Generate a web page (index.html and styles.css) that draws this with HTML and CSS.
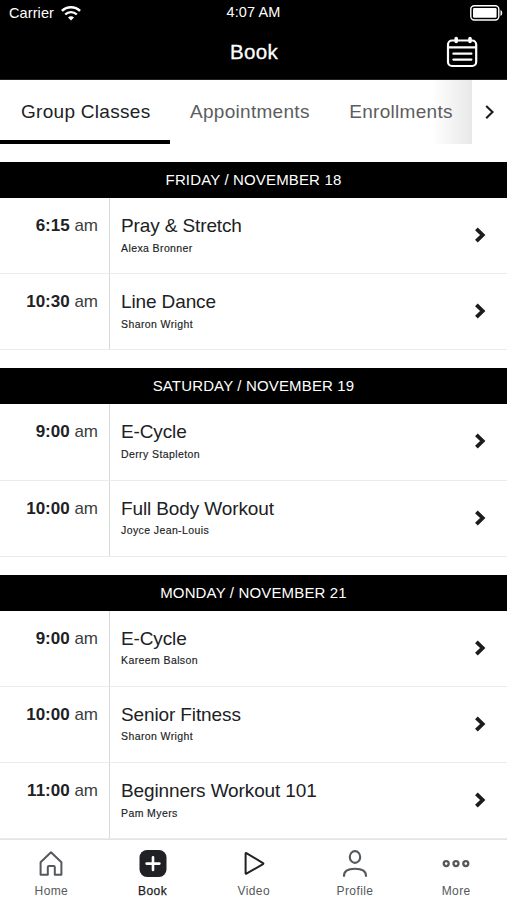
FILE: index.html
```html
<!DOCTYPE html>
<html lang="en">
<head>
<meta charset="utf-8">
<title>Book</title>
<link rel="stylesheet" href="styles.css">
</head>
<body>
<svg class="defs" width="0" height="0"><symbol id="chevron" viewBox="0 0 12 18"><path d="M2.4 2.8 8.7 9l-6.3 6.2" fill="none" stroke="currentColor" stroke-width="3.8"/></symbol></svg>
<div class="app">
  <header class="header">
    <div class="status">
      <div class="carrier"><span>Carrier</span>
        <svg width="20" height="16" viewBox="0 0 20 16" fill="none" stroke="#fff" stroke-width="2.4"><path d="M.9 5.9a13 13 0 0 1 18.2 0M4.2 9.5a8.3 8.3 0 0 1 11.6 0"/><path d="M10 15.6 7 12.6a4.2 4.2 0 0 1 6 0z" fill="#fff" stroke="none"/></svg>
      </div>
      <span class="clock">4:07 AM</span>
      <svg class="battery" width="33" height="16" viewBox="0 0 33 16"><rect x=".8" y=".8" width="28" height="14.2" rx="3.5" fill="none" stroke="#fff" stroke-width="1.4"/><rect x="3" y="3" width="23.6" height="9.8" rx="1.2" fill="#fff"/><path d="M30.5 5c2.3 1 2.3 5 0 6z" fill="#fff"/></svg>
    </div>
    <div class="titlebar">
      <h1>Book</h1>
      <svg class="calendar" width="32" height="32" viewBox="0 0 32 32" fill="none" stroke="#fff" stroke-width="2.2" stroke-linecap="round"><rect x="2" y="4.5" width="28.2" height="25.5" rx="4"/><path d="M2.5 11.3h27.2M7.4 17.7h18M7.4 23.6h18"/><path d="M10.2 2.6v2.8M24 2.6v2.8" stroke-width="3.6"/></svg>
    </div>
  </header>
  <nav class="tabs">
    <div class="tab-strip">
      <a class="tab active">Group Classes</a>
      <a class="tab">Appointments</a>
      <a class="tab">Enrollments</a>
    </div>
    <div class="tab-next"><svg width="12" height="16" viewBox="0 0 12 16" fill="none" stroke="#1c1c1e" stroke-width="2.1"><path d="m2.2 1.9 6.3 6.2-6.3 6.2"/></svg></div>
  </nav>
  <main class="schedule">
    <section class="day">
      <h2>FRIDAY / NOVEMBER 18</h2>
      <div class="row"><div class="time"><b>6:15</b> am</div><div class="info"><div class="name">Pray &amp; Stretch</div><div class="staff">Alexa Bronner</div></div><svg class="chev"><use href="#chevron"/></svg></div>
      <div class="row"><div class="time"><b>10:30</b> am</div><div class="info"><div class="name">Line Dance</div><div class="staff">Sharon Wright</div></div><svg class="chev"><use href="#chevron"/></svg></div>
    </section>
    <section class="day">
      <h2>SATURDAY / NOVEMBER 19</h2>
      <div class="row"><div class="time"><b>9:00</b> am</div><div class="info"><div class="name">E-Cycle</div><div class="staff">Derry Stapleton</div></div><svg class="chev"><use href="#chevron"/></svg></div>
      <div class="row"><div class="time"><b>10:00</b> am</div><div class="info"><div class="name">Full Body Workout</div><div class="staff">Joyce Jean-Louis</div></div><svg class="chev"><use href="#chevron"/></svg></div>
    </section>
    <section class="day">
      <h2>MONDAY / NOVEMBER 21</h2>
      <div class="row"><div class="time"><b>9:00</b> am</div><div class="info"><div class="name">E-Cycle</div><div class="staff">Kareem Balson</div></div><svg class="chev"><use href="#chevron"/></svg></div>
      <div class="row"><div class="time"><b>10:00</b> am</div><div class="info"><div class="name">Senior Fitness</div><div class="staff">Sharon Wright</div></div><svg class="chev"><use href="#chevron"/></svg></div>
      <div class="row"><div class="time"><b>11:00</b> am</div><div class="info"><div class="name">Beginners Workout 101</div><div class="staff">Pam Myers</div></div><svg class="chev"><use href="#chevron"/></svg></div>
    </section>
  </main>
  <footer class="bottom-nav">
    <a class="item"><svg width="30" height="30" viewBox="0 0 30 30" fill="none" stroke="#55585c" stroke-width="2" stroke-linejoin="round"><path d="M4.6 13.2 15 3.2l10.4 10v12.6h-6.6v-7.6q0-1.2-1.2-1.2h-4.6q-1.2 0-1.2 1.2v7.6H4.6z"/></svg><span>Home</span></a>
    <a class="item current"><svg width="30" height="30" viewBox="0 0 30 30"><rect x="1.5" y="1" width="27" height="27" rx="7.5" fill="#202124"/><path d="M15 8.2v12.8M8.6 14.6h12.8" stroke="#fff" stroke-width="2.6" stroke-linecap="round"/></svg><span>Book</span></a>
    <a class="item"><svg width="30" height="30" viewBox="0 0 30 30" fill="none" stroke="#202124" stroke-width="2" stroke-linejoin="round"><path d="M6.6 4.6v19.6q0 .9.8.5l16.6-9.6q.8-.5 0-1L7.4 4.1q-.8-.4-.8.5z"/></svg><span>Video</span></a>
    <a class="item"><svg width="30" height="30" viewBox="0 0 30 30" fill="none" stroke="#55585c" stroke-width="2.1"><ellipse cx="15" cy="8" rx="5.2" ry="5.9"/><path d="M4 27.8v-1c0-5 4-7.1 11-7.1s11 2.1 11 7.1v1"/></svg><span>Profile</span></a>
    <a class="item"><svg width="30" height="30" viewBox="0 0 30 30" fill="none" stroke="#55585c" stroke-width="2.3"><circle cx="5.2" cy="14.6" r="2.5"/><circle cx="15" cy="14.6" r="2.5"/><circle cx="24.8" cy="14.6" r="2.5"/></svg><span>More</span></a>
  </footer>
</div>
</body>
</html>
```
FILE: styles.css
```css
* { box-sizing: border-box; }
body { margin: 0; background: #fff; color: #202124; font-family: "Liberation Sans", Arial, sans-serif; }
h1, h2 { margin: 0; font-weight: 400; }
.defs { display: block; }
.app { width: 507px; height: 900px; display: flex; flex-direction: column; overflow: hidden; }

.header { flex: none; height: 80px; background: #000; color: #fff; border-bottom: 1px solid #222; }
.status { height: 25px; display: grid; grid-template-columns: 1fr auto 1fr; align-items: center; padding: 0 4px 0 9px; font-size: 14.5px; line-height: 24px; letter-spacing: .1px; }
.carrier { display: flex; align-items: center; gap: 7px; }
.clock { margin-left: -5px; padding-bottom: 1px; }
.battery { justify-self: end; }
.titlebar { height: 54px; display: grid; grid-template-columns: 1fr auto 1fr; align-items: center; padding: 0 29px 0 30px; }
h1 { grid-column: 2; font-size: 20.5px; line-height: 54px; letter-spacing: .3px; -webkit-text-stroke: .3px #fff; }
.calendar { grid-column: 3; justify-self: end; }

.tabs { flex: none; height: 64px; display: flex; }
.tab-strip { width: 472px; display: flex; background: linear-gradient(90deg, #fff 432px, #e8e8e8 472px); overflow: hidden; }
.tab { flex: none; padding: 0 19.6px 0 21px; font-size: 19px; line-height: 64px; letter-spacing: .29px; color: #5b5d61; }
.tab + .tab { padding-left: 20px; }
.tab.active { color: #202124; border-bottom: 4px solid #000; }
.tab-next { flex: 1; display: flex; align-items: center; padding-left: 12px; }

.schedule { flex: 1; padding-top: 18px; overflow: hidden; }
.day { margin-bottom: 18px; }
.day h2 { height: 36px; background: #000; color: #fff; text-align: center; font-size: 15px; line-height: 36px; letter-spacing: .15px; }
.row { height: 76.2px; display: flex; border-bottom: 1px solid #ebebec; }
.time { width: 110px; padding: 17px 11px 0 0; border-right: 1px solid #d8d9db; text-align: right; font-size: 17px; line-height: 22px; color: #3c3e41; }
.time b { color: #202124; }
.info { flex: 1; padding: 17px 0 0 11px; }
.name { font-size: 19px; line-height: 22px; letter-spacing: -.12px; }
.staff { margin-top: 3.5px; font-size: 10.5px; line-height: 14px; letter-spacing: .4px; -webkit-text-stroke: .15px #202124; }
.chev { flex: none; width: 12px; height: 18px; margin: 28px 21px 0 0; color: #1c1c1e; }

.bottom-nav { flex: none; height: 61px; display: grid; grid-template-columns: repeat(5, 101.2px); padding-left: .8px; border-top: 1px solid #e3e3e4; }
.item { display: flex; flex-direction: column; align-items: center; padding-top: 9px; font-size: 12px; line-height: 16px; letter-spacing: .4px; color: #55585c; }
.item span { margin-top: 4px; }
.item.current { color: #202124; -webkit-text-stroke: .25px #202124; }
```
